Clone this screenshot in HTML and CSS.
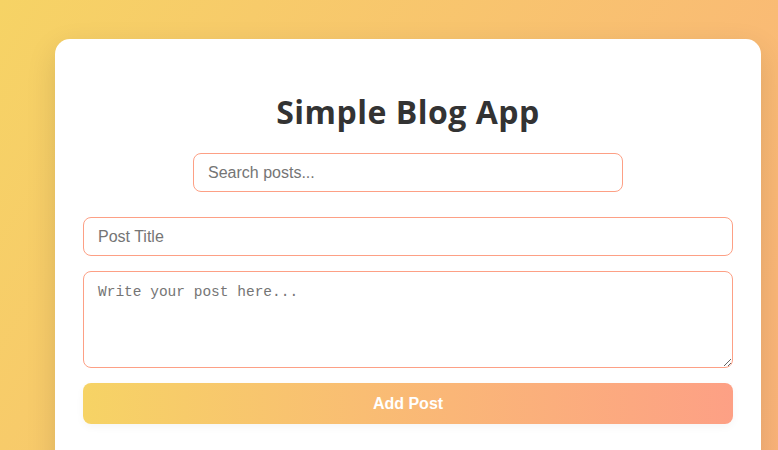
FILE: index.html
```html
<!DOCTYPE html>
<html lang="en">
<head>
<meta charset="utf-8">
<title>Simple Blog App</title>
<link rel="stylesheet" href="styles.css">
</head>
<body>
  <div class="page">
    <main class="card">
      <h1 class="title">Simple Blog App</h1>
      <input class="search" type="text" placeholder="Search posts...">
      <form class="post-form">
        <input class="field" type="text" placeholder="Post Title">
        <textarea class="field area" placeholder="Write your post here..."></textarea>
        <button class="add-btn" type="button">Add Post</button>
      </form>
    </main>
  </div>
</body>
</html>
```

FILE: styles.css
```css
* { box-sizing: border-box; }
html { overflow: hidden; }
body {
  margin: 0;
  font-family: "Liberation Sans", Arial, sans-serif;
}
.page {
  min-height: 1540px;
  padding: 39px 17px 40px 55px;
  background: linear-gradient(120deg, #f6d365 0%, #fda085 100%);
}
.card {
  background: #fff;
  border-radius: 15px;
  padding: 30px 28px 40px;
  min-height: 600px;
  box-shadow: 0 10px 30px rgba(0, 0, 0, 0.12);
  display: flex;
  flex-direction: column;
  align-items: center;
}
.title {
  margin: 21px 0 20px;
  font-family: "Open Sans", "Noto Sans", sans-serif;
  font-size: 32px;
  line-height: 43px;
  font-weight: 700;
  color: #333;
  text-align: center;
  letter-spacing: 0.5px;
}
.search {
  width: 430px;
  height: 39px;
  padding: 0 14px;
  border: 1px solid #fda085;
  border-radius: 8px;
  font-family: "Liberation Sans", Arial, sans-serif;
  font-size: 16px;
  color: #333;
  outline: none;
}
.post-form {
  width: 100%;
  margin-top: 25px;
  display: flex;
  flex-direction: column;
  gap: 15px;
}
.field {
  width: 100%;
  height: 39px;
  padding: 0 14px;
  border: 1px solid #fda085;
  border-radius: 8px;
  font-family: "Liberation Sans", Arial, sans-serif;
  font-size: 16px;
  color: #333;
  outline: none;
}
.area {
  height: 97px;
  padding: 12px 14px;
  font-family: "Liberation Mono", monospace;
  font-size: 14.5px;
  resize: vertical;
}
::placeholder { color: #757575; opacity: 1; }
.add-btn {
  height: 41px;
  border: none;
  border-radius: 8px;
  background: linear-gradient(to right, #f6d365 0%, #fda085 100%);
  color: #fff;
  font-family: "Liberation Sans", Arial, sans-serif;
  font-size: 16px;
  font-weight: 700;
  cursor: pointer;
  box-shadow: 0 3px 8px rgba(0, 0, 0, 0.04);
}
```
